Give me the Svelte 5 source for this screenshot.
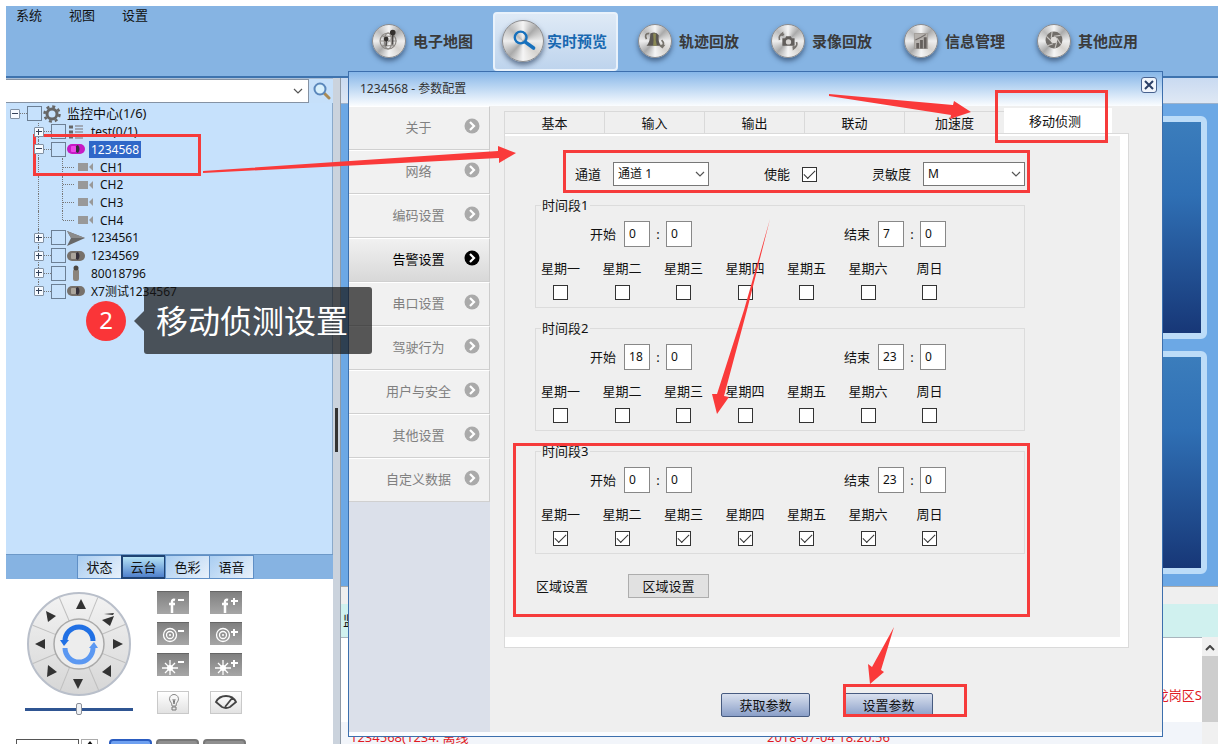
<script lang="ts">
  type TreeRow = { level: number; name: string; icon: string; open?: boolean; selected?: boolean; last?: boolean };

  const menus = ['系统', '视图', '设置'];

  const modules = [
    { id: 'map', name: '电子地图' },
    { id: 'live', name: '实时预览' },
    { id: 'track', name: '轨迹回放' },
    { id: 'record', name: '录像回放' },
    { id: 'info', name: '信息管理' },
    { id: 'other', name: '其他应用' }
  ];

  const tree: TreeRow[] = [
    { level: 0, name: '监控中心(1/6)', icon: 'gear', open: true },
    { level: 1, name: 'test(0/1)', icon: 'list' },
    { level: 1, name: '1234568', icon: 'car', open: true, selected: true },
    { level: 2, name: 'CH1', icon: 'camera' },
    { level: 2, name: 'CH2', icon: 'camera' },
    { level: 2, name: 'CH3', icon: 'camera' },
    { level: 2, name: 'CH4', icon: 'camera', last: true },
    { level: 1, name: '1234561', icon: 'arrow' },
    { level: 1, name: '1234569', icon: 'car' },
    { level: 1, name: '80018796', icon: 'person' },
    { level: 1, name: 'X7测试1234567', icon: 'car', last: true }
  ];

  const panelTabs = ['状态', '云台', '色彩', '语音'];
  const ptzActions = ['focus-', 'focus+', 'zoom-', 'zoom+', 'iris-', 'iris+', 'light', 'wiper'];
  const sections = ['关于', '网络', '编码设置', '告警设置', '串口设置', '驾驶行为', '用户与安全', '其他设置', '自定义数据'];
  const alarmTabs = ['基本', '输入', '输出', '联动', '加速度', '移动侦测'];
  const days = ['星期一', '星期二', '星期三', '星期四', '星期五', '星期六', '周日'];

  let moduleId = $state('live');
  let panelTab = $state('云台');
  let section = $state('告警设置');
  let alarmTab = $state('移动侦测');
  let enabled = $state(true);
  let channel = $state('通道 1');
  let sensitivity = $state('M');
  let speed = $state(50);
  let search = $state('');

  let periods = $state([
    { start: ['0', '0'], end: ['7', '0'], days: days.map(() => false) },
    { start: ['18', '0'], end: ['23', '0'], days: days.map(() => false) },
    { start: ['0', '0'], end: ['23', '0'], days: days.map(() => true) }
  ]);
</script>

{#snippet chevron()}
  <svg class="chevron" width="10" height="6" viewBox="0 0 10 6" aria-hidden="true">
    <path d="M1 1 L5 5 L9 1" fill="none" stroke="#555" stroke-width="1.2" />
  </svg>
{/snippet}

{#snippet moduleIcon(id: string)}
  <svg viewBox="0 0 34 34" aria-hidden="true">
    {#if id === 'map'}
      <g fill="none" stroke="#8b8783" stroke-width="1.2">
        <circle cx="16" cy="17" r="8.500" />
        <ellipse cx="16" cy="17" rx="4" ry="8.500" />
        <path d="M8 17 H25 M10 12 H23 M10 22 H23" />
      </g>
      <path d="M21 8 V21 M14 15 V22" stroke="#33302e" stroke-width="1.2" />
      <circle cx="21" cy="8" r="3" fill="#33302e" />
      <circle cx="14" cy="15" r="2.500" fill="#33302e" />
    {:else if id === 'live'}
      <circle cx="15" cy="14" r="5" fill="none" stroke="#1771bd" stroke-width="2" />
      <path d="M19 18 L26 23" stroke="#1771bd" stroke-width="3" stroke-linecap="round" />
    {:else if id === 'track'}
      <path d="M8 22 Q12 18 12 9 Q18 6 21 11 Q20 17 23 22 Z" fill="#5b5753" />
      <path d="M15 22 Q16 16 15 9 L18 9 Q17 16 19 22 Z" fill="#8c8a55" />
      <path d="M8 15 Q5 9 11 9 M24 16 Q28 20 24 23" fill="none" stroke="#77736c" stroke-width="1.8" />
      <path d="M20 21 L28 21 L25 25 Z" fill="#77736c" />
    {:else if id === 'record'}
      <path d="M11 14 h3 l1 -2 h5 l1 2 h3 v8 h-13 Z" fill="#625e5b" />
      <circle cx="17.500" cy="18" r="2.800" fill="#d8d5d2" />
      <path d="M8 16 Q6 10 13 10 M26 18 Q28 23 22 24" fill="none" stroke="#77736f" stroke-width="1.800" />
      <path d="M12 7 v5 l-4 -2 Z M22 22 v5 l4 -3 Z" fill="#77736f" />
    {:else if id === 'info'}
      <rect x="10" y="9" width="14" height="16" fill="#b5b1ad" stroke="#a39f9b" />
      <path d="M12 25 V19 h3 V25 M16 25 V16 h3 V25 M20 25 V13 h3 V25 Z" fill="#65605d" />
      <path d="M11 16 L17 13 L22 10" fill="none" stroke="#75706d" stroke-width="1.2" />
    {:else}
      <circle cx="17" cy="16" r="9" fill="#716d69" />
      <circle cx="17" cy="16" r="3.500" fill="#dedbd8" />
      <g stroke="#c8c5c2" stroke-width="1.2">
        <path d="M17 12 L24 11 M20 14 L24 20 M20 18 L18 25 M16 20 L10 22 M14 17 L9 12 M14 14 L15 7" />
      </g>
    {/if}
  </svg>
{/snippet}

{#snippet treeIcon(icon: string, selected = false)}
  <svg width="18" height="18" viewBox="0 0 18 18" aria-hidden="true">
    {#if icon === 'gear'}
      <circle cx="9" cy="9" r="5" fill="none" stroke="#666" stroke-width="3" />
      <circle cx="9" cy="9" r="7.500" fill="none" stroke="#666" stroke-width="2.500" stroke-dasharray="3 2.890" />
    {:else if icon === 'list'}
      <path d="M2 4 h4 M2 9 h4 M2 14 h4" stroke="#666" stroke-width="3" />
      <path d="M8 3 h8 M8 6 h8 M8 9 h8 M8 12 h8 M8 15 h8" stroke="#9297a0" stroke-width="1.500" />
    {:else if icon === 'car'}
      <rect x="0" y="4" width="18" height="10" rx="5" fill={selected ? '#c61bc4' : '#77716b'} />
      <rect x="4" y="6" width="5" height="6" rx="1" fill={selected ? '#ee49ea' : '#aba59c'} />
      <path d="M11 5 Q14 9 11 13 L9 12 V6 Z" fill="#35303a" />
    {:else if icon === 'arrow'}
      <path d="M0 2 L18 9 L0 17 L4 9 Z" fill="#686868" />
      <path d="M0 2 L18 9 L4 9 Z" fill="#8b8b8b" />
    {:else if icon === 'person'}
      <rect x="6" y="5" width="6" height="12" rx="2" fill="#8b847c" />
      <circle cx="9" cy="4" r="2.500" fill="#4d4742" />
    {/if}
  </svg>
{/snippet}

{#snippet timeField(label: string, value: string[])}
  <div class="time">
    <span>{label}</span>
    <input aria-label="{label} 时" bind:value={value[0]} />
    <b>:</b>
    <input aria-label="{label} 分" bind:value={value[1]} />
  </div>
{/snippet}

<div class="app">
  <header class="topbar">
    <nav class="menu">
      {#each menus as item (item)}
        <button>{item}</button>
      {/each}
    </nav>
    <nav class="modules">
      {#each modules as m (m.id)}
        <button class:active={m.id === moduleId} onclick={() => (moduleId = m.id)}>
          <span class="disc">{@render moduleIcon(m.id)}</span>
          {m.name}
        </button>
      {/each}
    </nav>
  </header>

  <div class="workspace">
    <aside class="left">
      <div class="search">
        <div class="combo">
          <input aria-label="搜索" bind:value={search} />
          {@render chevron()}
        </div>
        <button aria-label="搜索">
          <svg width="18" height="18" viewBox="0 0 18 18">
            <path d="M11 11 L16 16" stroke="#a98a55" stroke-width="3" stroke-linecap="round" />
            <circle cx="7" cy="7" r="5.500" fill="#d9f0fc" stroke="#5a87bb" stroke-width="2" />
          </svg>
        </button>
      </div>

      <div class="tree-pane">
        <ul class="tree">
          {#each tree as row (row.name)}
            <li class="level-{row.level}" class:last={row.last}>
              {#if row.level < 2}
                <button class="toggle" class:open={row.open} aria-label="展开 {row.name}"></button>
                <i class="link"></i>
                <input class="node-check" type="checkbox" aria-label={row.name} />
                {@render treeIcon(row.icon, row.selected)}
              {:else}
                <i class="link"></i>
                <svg width="16" height="10" viewBox="0 0 16 10" aria-hidden="true">
                  <path d="M0 1 h10 v8 h-10 Z M15 1 v8 l-4 -4 Z" fill="#999" />
                </svg>
              {/if}
              <span class="name" class:selected={row.selected}>{row.name}</span>
            </li>
          {/each}
        </ul>
      </div>

      <div class="panel-tabs">
        {#each panelTabs as tab (tab)}
          <button class:active={tab === panelTab} onclick={() => (panelTab = tab)}>{tab}</button>
        {/each}
      </div>

      <div class="ptz">
        <div class="ptz-main">
          <div class="ptz-left">
            <svg width="106" height="106" viewBox="0 0 106 106" role="img" aria-label="云台方向">
              <defs>
                <linearGradient id="dial" x1="0" y1="0" x2="0" y2="1">
                  <stop offset="0" stop-color="#f3f3f3" />
                  <stop offset="1" stop-color="#d6d6d6" />
                </linearGradient>
              </defs>
              <circle cx="53" cy="53" r="51" fill="url(#dial)" stroke="#b9bfca" stroke-width="2" />
              <g stroke="#bfbfbf">
                {#each [0, 1, 2, 3, 4, 5, 6, 7] as i (i)}
                  <path d="M53 28 V3" transform="rotate({22 + i * 45} 53 53)" />
                {/each}
              </g>
              <g fill="#333">
                <path d="M55 8 L60 18 H50 Z" />
                <path d="M52 98 L47 88 H57 Z" />
                <path d="M9 53 L19 48 V58 Z" />
                <path d="M97 53 L87 48 V58 Z" />
                <path d="M30 25 L20 20 L22 31 Z" />
                <path d="M78 23 L88 22 L87 24 Z" />
                <path d="M76 29 L88 25 L84 35 Z" />
                <path d="M22 74 L31 81 L21 86 Z" />
                <path d="M85 74 V86 L76 81 Z" />
              </g>
              <circle cx="53" cy="53" r="25" fill="#ededed" stroke="#aaa" stroke-width="1.500" />
              <g fill="none" stroke-width="5">
                <path d="M39 50 A14 14 0 0 1 67 50" stroke="#2170e4" />
                <path d="M67 57 A14 14 0 0 1 39 57" stroke="#5b98f2" />
              </g>
              <path d="M34 49 h9 l-5 6 Z" fill="#2170e4" />
              <path d="M63 57 h9 l-4 -6 Z" fill="#5b98f2" />
            </svg>
            <input type="range" aria-label="云台速度" bind:value={speed} />
          </div>

          <div class="ptz-actions">
            {#each ptzActions as action (action)}
              <button class:light={action === 'light' || action === 'wiper'} aria-label={action}>
                <svg width="32" height="23" viewBox="0 0 32 23" fill="none" stroke="#fff" stroke-width="2">
                  {#if action.startsWith('focus')}
                    <path d="M18 8 Q15 7 15 10 V21 M12 12 H18" stroke-width="2.500" />
                  {:else if action.startsWith('zoom')}
                    <circle cx="13" cy="12" r="6.500" stroke-width="1.300" />
                    <circle cx="13" cy="12" r="3.500" stroke-width="1.300" />
                    <circle cx="13" cy="12" r="1" fill="#fff" stroke="none" />
                  {:else if action.startsWith('iris')}
                    <path d="M13 6 V21 M5 14 H21 M8 9 L18 19 M18 9 L8 19" stroke-width="1.300" />
                    <circle cx="13" cy="14" r="3" fill="#fff" stroke="none" />
                  {:else if action === 'light'}
                    <path d="M15 15 Q15 12 13 10 A4.500 4.500 0 1 1 21 10 Q19 12 19 15 Z" stroke="#888" stroke-width="1" />
                    <path d="M15 16 h4 v3 h-4 Z M16 8 l1 5 l1 -5" stroke="#777" stroke-width="1" />
                  {:else}
                    <path d="M12 16 L6 11 Q9 5 16 5 Q23 5 26 11 L20 16 Q16 18 12 16 Z M15 16 L23 6" stroke="#444" stroke-width="1.800" />
                  {/if}
                  {#if action.endsWith('-')}
                    <path d="M21 8 h6" />
                  {:else if action.endsWith('+')}
                    <path d="M21 9 h7 M24 6 v7" />
                  {/if}
                </svg>
              </button>
            {/each}
          </div>
        </div>

        <div class="preset">
          <input aria-label="预置点" />
          <button class="spin" aria-label="增加">
            <svg width="8" height="5" viewBox="0 0 8 5"><path d="M4 0 L8 5 H0 Z" fill="#111" /></svg>
          </button>
          <button class="key primary" aria-label="调用"></button>
          <button class="key" aria-label="设置"></button>
          <button class="key" aria-label="删除"></button>
        </div>
      </div>
    </aside>

    <div class="splitter"></div>

    <main class="right">
      <div class="strip"></div>
      <div class="videos">
        <div class="video"></div>
        <div class="video"></div>
      </div>
      <div class="gap"></div>
      <div class="events">
        <table>
          <thead>
            <tr><th>监控</th><th></th><th></th></tr>
          </thead>
          <tbody>
            <tr class="first"><td></td><td></td><td></td></tr>
            <tr><td></td><td></td><td class="place">龙岗区S</td></tr>
            <tr class="alt"><td>1234568(1234. 离线</td><td>2018-07-04 18:20:56</td><td></td></tr>
          </tbody>
        </table>
        <div class="scrollbar">
          <svg width="10" height="6" viewBox="0 0 10 6" aria-hidden="true">
            <path d="M1 5 L5 1 L9 5" fill="none" stroke="#444" stroke-width="2" />
          </svg>
          <div class="thumb"></div>
        </div>
      </div>
    </main>
  </div>

  <section class="dialog" role="dialog" aria-label="参数配置">
    <header class="title">
      <span>1234568 - 参数配置</span>
      <button class="close" aria-label="关闭">
        <svg width="10" height="10" viewBox="0 0 10 10">
          <path d="M1 1 L9 9 M9 1 L1 9" stroke="#2b3f66" stroke-width="2" />
        </svg>
      </button>
    </header>

    <div class="dialog-body">
      <nav class="sections">
        {#each sections as item (item)}
          <button class:active={item === section} onclick={() => (section = item)}>
            <span>{item}</span>
            <svg width="16" height="16" viewBox="0 0 16 16" aria-hidden="true">
              <circle cx="8" cy="8" r="7.500" fill="currentColor" />
              <path d="M6 4 L10 8 L6 12" fill="none" stroke="#fff" stroke-width="2.200" />
            </svg>
          </button>
        {/each}
      </nav>

      <div class="content">
        <div class="tabs" role="tablist">
          {#each alarmTabs as tab (tab)}
            <button role="tab" aria-selected={tab === alarmTab} class:active={tab === alarmTab} onclick={() => (alarmTab = tab)}>
              {tab}
            </button>
          {/each}
        </div>

        <div class="sheet">
          <div class="sheet-inner">
            <div class="options">
              <label>
                通道
                <span class="select channel">
                  <select bind:value={channel}>
                    <option>通道 1</option>
                    <option>通道 2</option>
                    <option>通道 3</option>
                    <option>通道 4</option>
                  </select>
                  {@render chevron()}
                </span>
              </label>
              <label>
                使能
                <input class="check" type="checkbox" bind:checked={enabled} />
              </label>
              <label>
                灵敏度
                <span class="select level">
                  <select bind:value={sensitivity}>
                    <option>L</option>
                    <option>M</option>
                    <option>H</option>
                  </select>
                  {@render chevron()}
                </span>
              </label>
            </div>

            {#each periods as period, i (i)}
              <fieldset>
                <legend>时间段{i + 1}</legend>
                <div class="times">
                  {@render timeField('开始', period.start)}
                  {@render timeField('结束', period.end)}
                </div>
                <div class="days">
                  {#each days as day, d (day)}
                    <label>
                      {day}
                      <input class="check" type="checkbox" bind:checked={period.days[d]} />
                    </label>
                  {/each}
                </div>
              </fieldset>
            {/each}

            <div class="region">
              <span>区域设置</span>
              <button>区域设置</button>
            </div>
          </div>
        </div>

        <footer class="actions">
          <button>获取参数</button>
          <button>设置参数</button>
        </footer>
      </div>
    </div>
  </section>

  <!-- step marks drawn over the windows -->
  <svg class="marks" width="1219" height="747" viewBox="0 0 1219 747" aria-hidden="true">
    <g fill="none" stroke="#f63b3b" stroke-width="3">
      <rect x="34.500" y="135.500" width="165" height="39" />
      <rect x="996.500" y="91.500" width="110" height="50" />
      <rect x="564.500" y="151.500" width="464" height="40" />
      <rect x="514.500" y="444.500" width="514" height="171" />
      <rect x="844.500" y="685.500" width="121" height="30" />
    </g>
    <g fill="#fa3a3a">
      <path d="M203 171 L498 151 V146 L516 153 L499 163 V158 L203 173 Z" />
      <path d="M829 94 L953 105 L954 101 L971 112 L950 119 L951 115 L829 96 Z" />
      <path d="M770 219 L747 310 L724 396 L729 397 L717 414 L712 394 L717 394 L744 310 Z" />
      <path d="M894 627 L881 670 L884 672 L870 684 L868 664 L872 667 Z" />
    </g>
  </svg>
  <div class="callout">
    <span class="step">2</span>
    <span class="tip">移动侦测设置</span>
  </div>
</div>

<style>
  :global(body) {
    margin: 0;
    background: #fff;
  }

  .app {
    position: relative;
    display: flex;
    flex-direction: column;
    box-sizing: border-box;
    height: 100vh;
    padding: 6px 1px 3px 6px;
    overflow: hidden;
    color: #111;
    font: 13px/18px "Noto Sans", "Noto Sans CJK SC", sans-serif;
  }

  .app * {
    box-sizing: border-box;
  }

  button,
  input,
  select {
    margin: 0;
    padding: 0;
    border: 0;
    background: none;
    color: inherit;
    font: inherit;
  }

  svg {
    display: block;
    flex: none;
  }

  /* top bar */
  .topbar {
    display: flex;
    height: 72px;
    flex: none;
    background: #86b4e3;
    border-bottom: 2px solid #3e73ae;
  }

  .menu {
    display: flex;
    align-items: flex-start;
    gap: 27px;
    width: 355px;
    flex: none;
    padding-left: 10px;
  }

  .modules {
    display: flex;
    align-items: center;
  }

  .modules button {
    display: flex;
    align-items: center;
    gap: 7px;
    width: 125px;
    height: 59px;
    margin: 0 4px;
    padding-left: 7px;
    border-radius: 4px;
    color: #3a3a3a;
    font-size: 15px;
    font-weight: 700;
    white-space: nowrap;
  }

  .modules .active {
    gap: 3px;
    margin: 0 9px 0 -1px;
    background: linear-gradient(#dfeaf6, #bed4ed);
    border: 2px solid #e9f2fb;
    color: #1868b0;
  }

  .disc {
    width: 34px;
    height: 34px;
    flex: none;
    border: 1px solid #8d8d8f;
    border-radius: 50%;
    background: conic-gradient(#f5f5f5, #aaa 12%, #eee 25%, #d5d2ce 36%, #f5f5f5 50%, #aaa 62%, #eee 75%, #bbb 87%, #f5f5f5);
    box-shadow: 0 3px 5px rgba(30, 50, 80, 0.6);
  }

  .disc svg {
    width: 100%;
    height: 100%;
  }

  .active .disc {
    width: 42px;
    height: 42px;
  }

  .workspace {
    display: flex;
    flex: 1;
    min-height: 0;
  }

  /* left column */
  .left {
    display: flex;
    flex-direction: column;
    width: 327px;
    flex: none;
    overflow: hidden;
  }

  .search {
    display: flex;
    height: 25px;
    flex: none;
    background: #c6e0fa;
    border-top: 1px solid #a9bdd4;
  }

  .combo {
    display: flex;
    align-items: center;
    flex: 1;
    padding-right: 5px;
    background: #fff;
    border: 1px solid #8592a3;
    border-left: 0;
  }

  .combo input {
    flex: 1;
    min-width: 0;
    height: 100%;
  }

  .search button {
    padding: 0 2px 0 4px;
  }

  .tree-pane {
    flex: 1;
    padding-top: 2px;
    background: #c6e1fc;
    border-right: 1px solid #8aa9ca;
  }

  .tree {
    display: grid;
    grid-auto-rows: 1fr;
    height: 195px;
    margin: 0;
    padding: 0;
    list-style: none;
    font-size: 12px;
  }

  .tree li {
    position: relative;
    display: flex;
    align-items: center;
    min-height: 0;
    line-height: 17px;
    white-space: nowrap;
  }

  .tree .level-0 {
    padding-left: 4px;
    font-size: 13px;
  }

  .level-1 {
    padding-left: 28px;
  }

  .level-2 {
    padding-left: 57px;
  }

  /* guide lines */
  .level-1::before,
  .level-2::before,
  .level-2::after {
    content: '';
    position: absolute;
    top: 0;
    bottom: 0;
    left: 32px;
    border-left: 1px dotted #777;
  }

  .level-2::after {
    left: 56px;
  }

  .level-1.last::before,
  .level-2.last::after {
    bottom: 50%;
  }

  .link {
    width: 7px;
    border-top: 1px dotted #777;
  }

  .level-2 .link {
    width: 11px;
    margin-right: 4px;
  }

  .toggle {
    position: relative;
    z-index: 1;
    width: 10px;
    height: 10px;
    background: #f6faff;
    border: 1px solid #8291a3;
    border-radius: 1px;
  }

  .toggle::before,
  .toggle::after {
    content: '';
    position: absolute;
    background: #34425a;
  }

  .toggle::before {
    top: 3px;
    left: 1px;
    width: 6px;
    height: 1px;
  }

  .toggle::after {
    top: 1px;
    left: 3px;
    width: 1px;
    height: 6px;
  }

  .toggle.open::after {
    display: none;
  }

  .node-check {
    width: 15px;
    height: 15px;
    flex: none;
    margin-right: 1px;
    appearance: none;
    border: 1px solid #6c7f94;
  }

  .name {
    margin-left: 4px;
    padding: 0 2px;
  }

  .name.selected {
    background: #2f67c8;
    color: #fff;
  }

  .panel-tabs {
    display: flex;
    height: 25px;
    flex: none;
    padding-left: 71px;
    background: #86b3e2;
    border-top: 1px solid #6d99c8;
  }

  .panel-tabs button {
    width: 45px;
    background: linear-gradient(135deg, #a9cdf1, #e8f1fb);
    border: 1px solid #5f8fc6;
    margin-right: -1px;
  }

  .panel-tabs .active {
    background: linear-gradient(#b5e3f5, #4f80cc);
    border: 2px solid #1f4373;
  }

  .ptz {
    height: 165px;
    flex: none;
    padding: 12px 10px 0;
    background: #fff;
    overflow: hidden;
  }

  .ptz-main {
    display: flex;
    gap: 24px;
    height: 124px;
    padding-left: 9px;
  }

  .ptz-left {
    display: flex;
    flex-direction: column;
    align-items: center;
    gap: 6px;
    width: 108px;
  }

  .ptz-left input {
    width: 108px;
    height: 12px;
    appearance: none;
    background: linear-gradient(#2f5592, #2f5592) center / 100% 3px no-repeat;
  }

  .ptz-left input::-webkit-slider-thumb {
    width: 6px;
    height: 12px;
    appearance: none;
    background: #eef1f5;
    border: 1px solid #8c9099;
    border-radius: 2px;
  }

  .ptz-actions {
    display: grid;
    grid-template-columns: 32px 32px;
    gap: 8px 21px;
    align-content: start;
  }

  .ptz-actions button {
    height: 23px;
    background: linear-gradient(#808080, #a6a6a6);
    border-top: 1px solid #666;
  }

  .ptz-actions .light {
    margin-top: 7px;
    background: linear-gradient(#fff, #e2e2e2);
    border: 1px solid #c9c9c9;
  }

  .ptz-actions .light svg {
    margin: -1px;
  }

  .preset {
    display: flex;
    margin-top: 24px;
  }

  .preset input {
    width: 63px;
    height: 22px;
    border: 1px solid #555;
  }

  .spin {
    display: flex;
    justify-content: center;
    width: 17px;
    height: 22px;
    margin: 0 11px 0 2px;
    padding-top: 1px;
    border: 1px solid #aaa;
  }

  .key {
    width: 43px;
    height: 22px;
    margin-right: 4px;
    background: #8f8f8f;
    border: 2px solid #777;
    border-radius: 4px;
  }

  .key.primary {
    background: #6ea0f0;
    border-color: #2a5cc0;
  }

  .splitter {
    width: 8px;
    flex: none;
    background: linear-gradient(#333, #333) center 53% / 3px 44px no-repeat, #cbd3dd;
    border-right: 1px solid #8e99a6;
  }

  /* right column */
  .right {
    display: flex;
    flex-direction: column;
    flex: 1;
    min-width: 0;
  }

  .strip {
    height: 26px;
    flex: none;
    background: linear-gradient(#c9daf1, #dfe8f4);
    border-bottom: 1px solid #9db2cb;
  }

  .videos {
    display: flex;
    flex-direction: column;
    gap: 12px;
    flex: 1;
    padding: 12px 11px;
    background: #6ca8e5;
  }

  .video {
    flex: 1;
    border: 6px solid #bcdcf8;
    border-radius: 6px;
    background: linear-gradient(#3b7dbc, #2f6fb4 35%, #173777);
  }

  .gap {
    height: 18px;
    flex: none;
    background: #efefef;
    border-top: 1px solid #aaa;
  }

  .events {
    display: flex;
    height: 140px;
    flex: none;
    overflow: hidden;
    background: linear-gradient(#d0f1ef 33px, #fff 33px);
  }

  .events table {
    flex: 1;
    width: 100%;
    height: 148px;
    border-collapse: collapse;
    table-layout: fixed;
    color: #e01b24;
    white-space: nowrap;
  }

  th {
    height: 33px;
    padding: 0 2px;
    border-bottom: 1px solid #a9b5bd;
    color: #111;
    font-weight: 400;
    text-align: left;
  }

  td {
    height: 40px;
    padding: 0 9px;
    overflow: hidden;
  }

  th:nth-child(1) {
    width: 417px;
  }

  th:nth-child(2) {
    width: 380px;
  }

  .first td {
    height: 45px;
  }

  .alt td {
    height: 30px;
    background: #f2f5fa;
  }

  .place {
    padding: 4px 0 0;
    direction: rtl;
    vertical-align: top;
  }

  .scrollbar {
    display: flex;
    flex-direction: column;
    align-items: center;
    width: 16px;
    margin-top: 33px;
    padding-top: 8px;
    background: #f0f0f0;
  }

  .thumb {
    width: 100%;
    height: 66px;
    margin-top: 5px;
    background: #cdcdcd;
  }

  /* parameter window */
  .dialog {
    position: absolute;
    top: 71px;
    right: 56px;
    left: 348px;
    border: 1px solid #3c6fad;
    background: #efefef;
  }

  .title {
    display: flex;
    align-items: center;
    justify-content: space-between;
    height: 34px;
    padding: 0 5px 0 11px;
    background: linear-gradient(#86b6e8, #fbfdff);
    color: #333;
    font-size: 12px;
  }

  .close {
    display: grid;
    place-items: center;
    width: 16px;
    height: 16px;
    margin-bottom: 8px;
    border: 1px solid #48628f;
    border-radius: 3px;
    background: #f2f6fc;
  }

  .dialog-body {
    display: flex;
    border-bottom: 4px solid #fafcff;
  }

  .sections {
    width: 141px;
    flex: none;
    background: #dbe0ea;
  }

  .sections button {
    display: flex;
    align-items: center;
    width: 100%;
    height: 44px;
    padding: 0 9px 2px 0;
    background: #f1f1f1;
    border-top: 1px solid #fff;
    border-right: 1px solid #ccc;
    border-bottom: 1px solid #d0d0d0;
    color: #808080;
  }

  .sections span {
    flex: 1;
    padding-left: 24px;
    text-align: center;
    white-space: nowrap;
  }

  .sections svg {
    margin-bottom: 2px;
    color: #aaa;
  }

  .sections .active {
    background: linear-gradient(#f1f1f1, #d8d8d8);
    color: #000;
  }

  .sections .active svg {
    color: #000;
  }

  .content {
    flex: 1;
    min-width: 0;
    padding: 2px 33px 15px 14px;
  }

  .tabs {
    display: flex;
    align-items: flex-end;
  }

  .tabs button {
    width: 100px;
    height: 22px;
    border: 1px solid #d9d9d9;
    border-bottom: 0;
    border-right: 0;
    line-height: 20px;
  }

  .tabs .active {
    width: 108px;
    height: 25px;
    padding-right: 6px;
    background: #fff;
    border: 0;
  }

  .sheet {
    border: 1px solid #dadada;
  }

  .sheet-inner {
    padding: 26px 95px 39px 30px;
    border: solid #fff;
    border-width: 2px 8px 10px 0;
  }

  .options {
    display: flex;
    align-items: center;
    justify-content: space-between;
    margin-bottom: 10px;
    padding-left: 40px;
  }

  .options label {
    display: flex;
    align-items: center;
    gap: 12px;
  }

  .select {
    position: relative;
    height: 24px;
  }

  .select.channel {
    width: 96px;
  }

  .select.level {
    width: 102px;
  }

  .select select {
    width: 100%;
    height: 24px;
    padding: 0 4px;
    appearance: none;
    background: #fff;
    border: 1px solid #777;
    border-radius: 0;
    font-size: 12px;
  }

  .select .chevron {
    position: absolute;
    top: 9px;
    right: 4px;
    pointer-events: none;
  }

  .check {
    display: grid;
    place-items: center;
    width: 15px;
    height: 15px;
    appearance: none;
    background: #fff;
    border: 1px solid #333;
  }

  .check:checked::after {
    content: '';
    width: 10px;
    height: 5px;
    margin-bottom: 3px;
    border: solid #333;
    border-width: 0 0 1px 1px;
    transform: rotate(-45deg);
  }

  fieldset {
    min-width: 0;
    margin: 0 0 11px;
    padding: 7px 4px 7px 5px;
    border: 1px solid #dcdcdc;
  }

  legend {
    height: 18px;
    padding: 0 2px 0 1px;
  }

  .times {
    display: flex;
    justify-content: space-between;
    width: 356px;
    margin-left: 49px;
  }

  .time {
    display: flex;
    align-items: center;
  }

  .time span {
    margin-right: 8px;
  }

  .time b {
    width: 16px;
    font-weight: 400;
    text-align: center;
  }

  .time input {
    width: 26px;
    height: 26px;
    padding: 0 0 2px 4px;
    background: #fff;
    border: 1px solid #888;
    font-size: 12px;
  }

  .days {
    display: flex;
    justify-content: space-between;
    width: 408px;
    margin-top: 12px;
  }

  .days label {
    display: flex;
    flex-direction: column;
    align-items: center;
    gap: 8px;
    min-width: 39px;
  }

  .region {
    display: flex;
    align-items: center;
    gap: 40px;
    margin-top: 20px;
    padding-left: 1px;
  }

  .region button {
    width: 81px;
    height: 24px;
    background: #e1e1e1;
    border: 1px solid #adadad;
  }

  .actions {
    display: flex;
    gap: 34px;
    margin-top: 45px;
    padding-left: 217px;
  }

  .actions button {
    width: 89px;
    height: 24px;
    background: linear-gradient(#d9e0ee, #8a9fc8);
    border: 1px solid #475b80;
    border-radius: 2px;
  }

  /* overlay */
  .marks {
    position: absolute;
    top: 0;
    left: 0;
    pointer-events: none;
  }

  .callout {
    position: absolute;
    top: 287px;
    left: 86px;
    display: flex;
    align-items: center;
    gap: 18px;
    color: #fff;
  }

  .step {
    width: 40px;
    height: 40px;
    border-radius: 50%;
    background: #fa3538;
    font-size: 24px;
    line-height: 38px;
    text-align: center;
  }

  .tip {
    position: relative;
    padding: 0 24px 0 12px;
    border-radius: 3px;
    background: rgba(20, 20, 20, 0.7);
    font-size: 32px;
    line-height: 67px;
    white-space: nowrap;
  }

  .tip::before {
    content: '';
    position: absolute;
    top: 24px;
    left: -10px;
    border: solid transparent;
    border-width: 10px 10px 10px 0;
    border-right-color: rgba(20, 20, 20, 0.7);
  }
</style>
